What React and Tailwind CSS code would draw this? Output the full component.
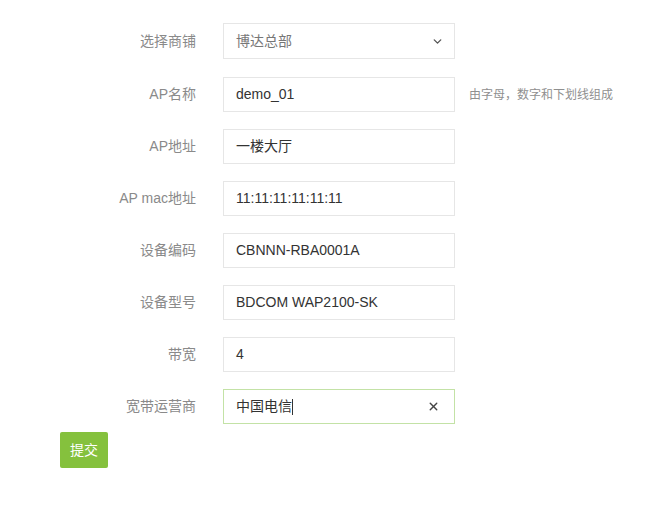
import { ChevronDown, X } from 'lucide-react';

const rows = [
  { label: 'AP名称', value: 'demo_01', hint: '由字母，数字和下划线组成' },
  { label: 'AP地址', value: '一楼大厅' },
  { label: 'AP mac地址', value: '11:11:11:11:11:11' },
  { label: '设备编码', value: 'CBNNN-RBA0001A' },
  { label: '设备型号', value: 'BDCOM WAP2100-SK' },
  { label: '带宽', value: '4' },
];

function Row({ label, children, hint, tall }) {
  return (
    <div className={tall ? 'flex items-center h-[36px]' : 'flex items-center h-[35px]'}>
      <div className="w-[196px] text-right text-[14px] text-[#8a8a8a]">{label}</div>
      <div className="ml-[27px] w-[232px] h-full">{children}</div>
      {hint && <div className="ml-[14px] text-[12px] text-[#8f8f8f]">{hint}</div>}
    </div>
  );
}

export default function App() {
  return (
    <div
      className="w-[661px] h-[505px] bg-white pt-[23px]"
      style={{ fontFamily: '"Liberation Sans", "Noto Sans CJK SC", sans-serif' }}
    >
      <div className="mb-[18px]">
        <Row label="选择商铺" tall>
          <div className="h-full border border-[#e6e6e6] flex items-center justify-between pl-[12px] pr-[10px] text-[14px] text-[#777]">
            <span>博达总部</span>
            <ChevronDown size={13} strokeWidth={2.5} className="text-[#555]" />
          </div>
        </Row>
      </div>
      <div className="flex flex-col gap-[17px]">
        {rows.map((r) => (
          <Row key={r.label} label={r.label} hint={r.hint}>
            <div className="h-full border border-[#e6e6e6] flex items-center pl-[12px] text-[14px] text-[#333]">
              {r.value}
            </div>
          </Row>
        ))}
        <Row label="宽带运营商">
          <div className="h-full border border-[#c3e2a6] flex items-center justify-between pl-[12px] pr-[14px] text-[14px] text-[#333]">
            <span className="flex items-center">
              中国电信<span className="inline-block w-px h-[16px] bg-[#333]" />
            </span>
            <X size={13} strokeWidth={2.5} className="text-[#444]" />
          </div>
        </Row>
      </div>
      <button
        type="button"
        className="ml-[60px] mt-[8px] w-[48px] h-[36px] bg-[#85c13d] text-white text-[14px] rounded-[2px]"
      >
        提交
      </button>
    </div>
  );
}
